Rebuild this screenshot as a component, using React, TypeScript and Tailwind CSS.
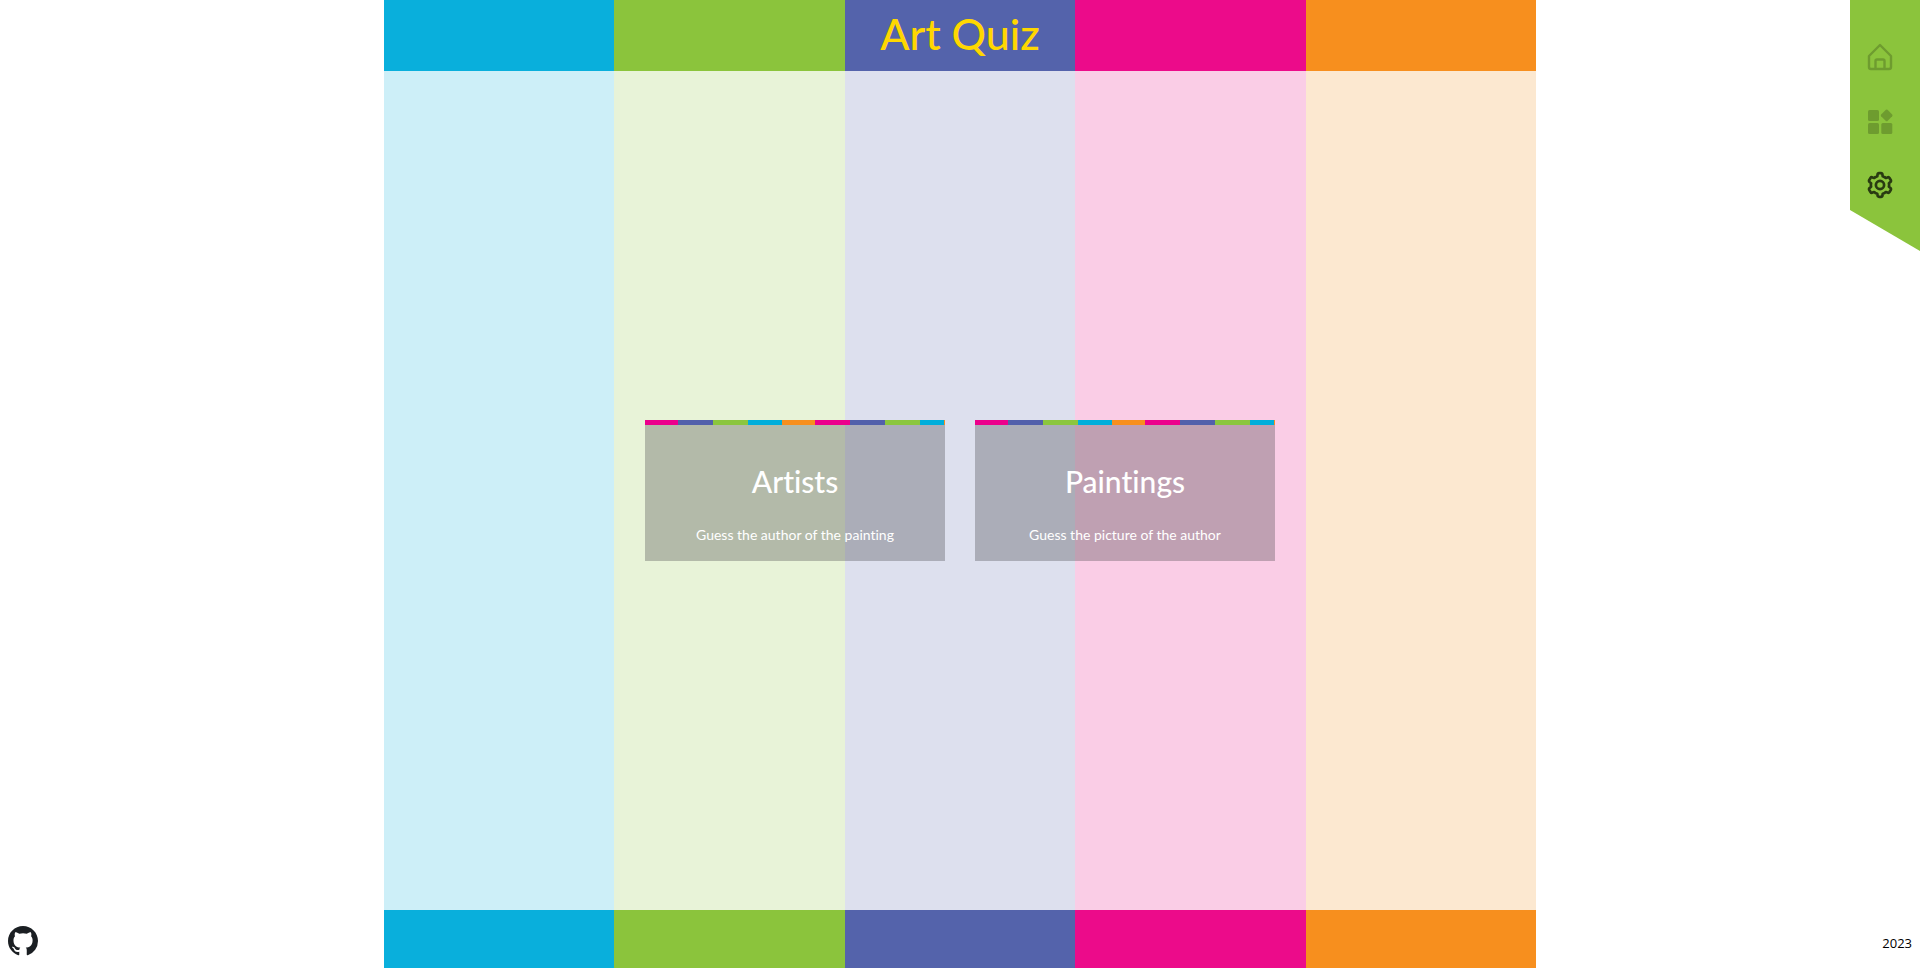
import React from 'react';

const solid = ['bg-[#09afdc]', 'bg-[#8bc43c]', 'bg-[#5463ab]', 'bg-[#ec0b8a]', 'bg-[#f78f1e]'];
const pale = ['bg-[#cdeff8]', 'bg-[#e8f3d8]', 'bg-[#dde0ee]', 'bg-[#facde6]', 'bg-[#fce8d0]'];

function Stripes({ colors }: { colors: string[] }) {
  return (
    <div className="absolute inset-0 grid grid-cols-5" aria-hidden="true">
      {colors.map((color) => (
        <div key={color} className={color} />
      ))}
    </div>
  );
}

function HomeIcon() {
  return (
    <svg viewBox="0 0 26 28" className="h-7 w-[26px]" fill="none" stroke="currentColor" strokeWidth="2.400" strokeLinejoin="round" aria-hidden="true">
      <path d="M13 2 L2 13 V24 Q2 26 4 26 H22 Q24 26 24 24 V13 Z" />
      <path d="M8.500 26 V18 Q8.500 16.500 10 16.500 H16 Q17.500 16.500 17.500 18 V26" />
    </svg>
  );
}

function CategoriesIcon() {
  return (
    <svg viewBox="0 0 26 28" className="h-7 w-[26px]" fill="currentColor" aria-hidden="true">
      <rect x="1" y="3" width="11" height="11" rx="1.500" />
      <rect x="1" y="16" width="11" height="11" rx="1.500" />
      <rect x="14.300" y="16" width="11" height="11" rx="1.500" />
      <path d="M18.900 2.800 Q19.700 2.100 20.500 2.800 L25.200 7.600 Q25.900 8.400 25.200 9.200 L20.500 14 Q19.700 14.700 18.900 14 L14.100 9.200 Q13.400 8.400 14.100 7.600 Z" />
    </svg>
  );
}

function GearIcon() {
  return (
    <svg viewBox="0 0 26 28" className="h-7 w-[26px]" fill="none" stroke="currentColor" strokeWidth="2.700" strokeLinejoin="round" aria-hidden="true">
      <circle cx="13" cy="14" r="4.100" />
      <path d="M10.500 3.800 Q10.700 2.200 12 2.200 H14 Q15.300 2.200 15.500 3.800 L15.700 5.200 Q17.500 5.800 18.800 7 L20.400 6.400 Q21.800 5.800 22.500 7 L23.700 9 Q24.400 10.300 23.200 11.200 L21.900 12.200 Q22.300 14 21.900 15.800 L23.200 16.800 Q24.400 17.700 23.700 19 L22.500 21 Q21.800 22.200 20.400 21.600 L18.800 21 Q17.500 22.200 15.700 22.800 L15.500 24.200 Q15.300 25.800 14 25.800 H12 Q10.700 25.800 10.500 24.200 L10.300 22.800 Q8.500 22.200 7.200 21 L5.600 21.600 Q4.200 22.200 3.500 21 L2.300 19 Q1.600 17.700 2.800 16.800 L4.100 15.800 Q3.700 14 4.100 12.200 L2.800 11.200 Q1.600 10.300 2.300 9 L3.500 7 Q4.200 5.800 5.600 6.400 L7.200 7 Q8.500 5.800 10.300 5.200 Z" />
    </svg>
  );
}

function QuizCard({ title, text }: { title: string; text: string }) {
  return (
    <button type="button" className="flex w-[300px] cursor-pointer flex-col text-white">
      <span className="block h-[5px] w-full bg-[linear-gradient(90deg,#ec008c_0_33px,#5260ab_33px_68px,#8bc63e_68px_103px,#00aedb_103px_137px,#f78f1e_137px_170px,#ec008c_170px_205px,#5260ab_205px_240px,#8bc63e_240px_275px,#00aedb_275px_299px,#f78f1e_299px)]" />
      <span className="flex w-full flex-col items-center gap-5 bg-[#38393b]/30 pt-9 pb-3">
        <span className="text-3xl leading-10 font-medium">{title}</span>
        <span className="text-sm leading-7">{text}</span>
      </span>
    </button>
  );
}

export default function App() {
  return (
    <div className="relative flex min-h-screen flex-col bg-white font-['Lato',sans-serif] [font-variant-ligatures:none]">
      <header className="relative mx-auto flex h-[71px] w-3/5 items-center justify-center pb-1">
        <Stripes colors={solid} />
        <h1 className="relative text-[43px] leading-[66px] font-medium text-[#ffd700]">Art Quiz</h1>
      </header>

      <main className="relative mx-auto flex w-3/5 grow items-center justify-center">
        <Stripes colors={pale} />
        <div className="relative flex gap-[30px]">
          <QuizCard title="Artists" text="Guess the author of the painting" />
          <QuizCard title="Paintings" text="Guess the picture of the author" />
        </div>
      </main>

      <footer className="flex h-[58px] items-center">
        <div className="flex w-1/5 pt-1 pl-2">
          <a href="https://github.com" aria-label="GitHub" className="text-[#1b1f23]">
            <svg viewBox="0 0 16 16" className="size-[30px]" fill="currentColor" aria-hidden="true">
              <path d="M8 0C3.580 0 0 3.580 0 8c0 3.540 2.290 6.530 5.470 7.590.4.070.55-.17.55-.38 0-.19-.01-.82-.01-1.490-2.010.37-2.530-.49-2.690-.94-.09-.23-.48-.94-.82-1.130-.28-.15-.68-.52-.01-.53.63-.01 1.080.58 1.230.82.72 1.210 1.870.87 2.330.66.07-.52.28-.87.51-1.070-1.780-.2-3.640-.89-3.640-3.950 0-.87.31-1.590.82-2.150-.08-.2-.36-1.020.08-2.120 0 0 .67-.21 2.200.82.64-.18 1.320-.27 2-.27s1.360.09 2 .27c1.530-1.040 2.200-.82 2.200-.82.44 1.100.16 1.920.08 2.120.51.56.82 1.270.82 2.150 0 3.070-1.870 3.750-3.650 3.950.29.25.54.73.54 1.480 0 1.070-.01 1.930-.01 2.200 0 .21.15.46.55.38A8.010 8.010 0 0 0 16 8c0-4.420-3.580-8-8-8z" />
            </svg>
          </a>
        </div>
        <div className="relative w-3/5 self-stretch">
          <Stripes colors={solid} />
        </div>
        <p className="w-1/5 pt-2 pr-2 text-right font-['Open_Sans',sans-serif] text-[13px] leading-6 text-black">2023</p>
      </footer>

      <nav aria-label="Main" className="absolute top-0 right-0 flex h-[251px] w-[70px] flex-col items-center gap-9 bg-[#8bc43c] pt-[43px] pr-[10px] text-black [clip-path:polygon(0_0,100%_0,100%_100%,0_210px)]">
        <button type="button" aria-label="Home" disabled className="opacity-20"><HomeIcon /></button>
        <button type="button" aria-label="Categories" disabled className="opacity-20"><CategoriesIcon /></button>
        <button type="button" aria-label="Settings" className="cursor-pointer opacity-70"><GearIcon /></button>
      </nav>
    </div>
  );
}
